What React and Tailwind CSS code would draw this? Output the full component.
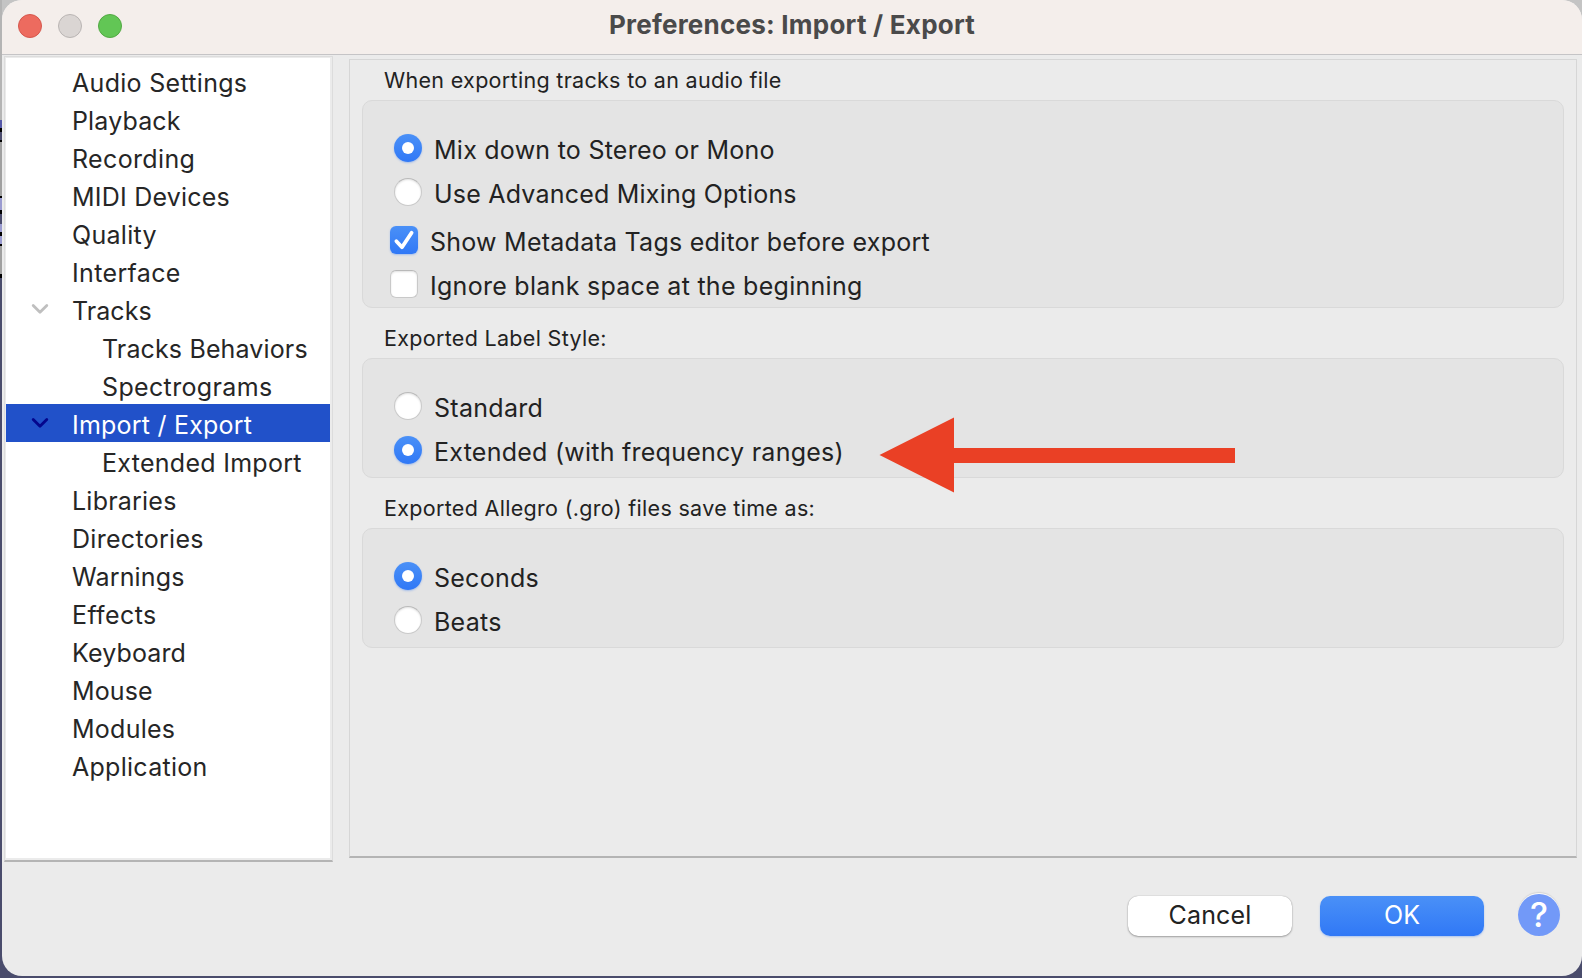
import React from "react";

const cx = (...c) => c.filter(Boolean).join(" ");

const NAV = [
  { label: "Audio Settings", t: "tracking-[0.3px]" },
  { label: "Playback", t: "tracking-[0.15px]" },
  { label: "Recording", t: "tracking-[0.35px]" },
  { label: "MIDI Devices", t: "tracking-[0.22px]" },
  { label: "Quality", t: "tracking-[0.3px]" },
  { label: "Interface", t: "tracking-[0.35px]" },
  { label: "Tracks", t: "tracking-[0.05px]", open: true },
  { label: "Tracks Behaviors", t: "tracking-[0.14px]", child: true },
  { label: "Spectrograms", t: "tracking-[0.35px]", child: true },
  { label: "Import / Export", t: "tracking-[0.22px]", open: true, selected: true },
  { label: "Extended Import", t: "tracking-[0.28px]", child: true },
  { label: "Libraries", t: "tracking-[0.22px]" },
  { label: "Directories", t: "tracking-[0.3px]" },
  { label: "Warnings", t: "tracking-[0.15px]" },
  { label: "Effects", t: "tracking-[0.4px]" },
  { label: "Keyboard", t: "tracking-[0.13px]" },
  { label: "Mouse", t: "tracking-[0.1px]" },
  { label: "Modules", t: "tracking-[0.25px]" },
  { label: "Application", t: "tracking-[0.28px]" },
];

function NavItem({ item }) {
  return (
    <li
      className={cx(
        "flex h-[38px] items-center text-[25px] leading-[38px] whitespace-nowrap",
        item.selected ? "bg-[#2151c9] text-white" : "text-[#262626]"
      )}
    >
      <span className={cx("flex shrink-0 justify-start pl-[25px]", item.child ? "w-[96px]" : "w-[66px]")}>
        {item.open && (
          <svg width="18" height="12" viewBox="0 0 18 12" fill="none">
            <path
              d="M2.2 2.4 9 9.2l6.8-6.8"
              stroke={item.selected ? "#04068c" : "#bfbfbf"}
              strokeWidth="2.8"
              strokeLinecap="round"
              strokeLinejoin="round"
            />
          </svg>
        )}
      </span>
      <span className={cx("pt-1", item.t)}>{item.label}</span>
    </li>
  );
}

function Radio({ checked }) {
  return checked ? (
    <span className="flex size-7 shrink-0 items-center justify-center rounded-full bg-linear-to-b from-[#4a90f7] to-[#3078f6] shadow-[0_1px_2px_rgba(48,120,246,0.35)]">
      <span className="size-3 rounded-full bg-white" />
    </span>
  ) : (
    <span className="size-7 shrink-0 rounded-full border border-[#c9c9c9] border-t-[#b9b9b9] bg-white shadow-[inset_0_1px_2px_rgba(0,0,0,0.12)]" />
  );
}

function Checkbox({ checked }) {
  return checked ? (
    <span className="flex size-7 shrink-0 items-center justify-center rounded-[6px] bg-linear-to-b from-[#4a90f7] to-[#3078f6] shadow-[0_1px_2px_rgba(48,120,246,0.35)]">
      <svg width="28" height="28" viewBox="0 0 28 28" fill="none">
        <path d="M6.4 15.2 12 21.2 21.6 6.8" stroke="#fff" strokeWidth="3.8" strokeLinecap="round" strokeLinejoin="round" />
      </svg>
    </span>
  ) : (
    <span className="size-7 shrink-0 rounded-[6px] border border-[#c9c9c9] border-t-[#b9b9b9] bg-white shadow-[inset_0_1px_2px_rgba(0,0,0,0.12)]" />
  );
}

function Option({ type = "radio", checked, label, t = "tracking-[0.25px]" }) {
  const Control = type === "radio" ? Radio : Checkbox;
  return (
    <div className={cx("flex h-7 items-center gap-3", type === "radio" ? "pl-[31px]" : "pl-[27px]")}>
      <Control checked={checked} />
      <span className={cx("pt-[3px] text-[25px] leading-7 whitespace-nowrap text-[#222]", t)}>{label}</span>
    </div>
  );
}

function Group({ title, className, children }) {
  return (
    <section>
      <h2 className="pl-[22px] text-[21.5px] leading-[42px] tracking-[0.31px] whitespace-nowrap text-[#222]">{title}</h2>
      <div
        className={cx(
          "-mt-px flex flex-col gap-4 rounded-[10px] border border-[#d9d9d9] bg-[#e4e4e4] pt-[33px]",
          className
        )}
      >
        {children}
      </div>
    </section>
  );
}

export default function App() {
  return (
    <div className="flex h-[978px] w-[1582px] overflow-hidden bg-linear-to-b from-[#c4c4c4] from-[40px] to-[#4a4c6c] to-[40px] font-['Inter',sans-serif]">
      <div className="flex w-[2px] shrink-0 flex-col">
        <div className="h-[120px] bg-[#b4b4b4]" />
        <div className="h-2 bg-[#5558a8]" />
        <div className="h-1 bg-black" />
        <div className="h-2 bg-[#4b4c6e]" />
        <div className="h-0.5 bg-black" />
        <div className="h-[54px] bg-[#a0a0a0]" />
        <div className="h-0.5 bg-black" />
        <div className="h-3 bg-[#9a9bd0]" />
        <div className="h-1 bg-black" />
        <div className="h-[10px] bg-[#4b4c6e]" />
        <div className="h-2 bg-[#9a9bd0]" />
        <div className="h-1 bg-black" />
        <div className="h-2 bg-[#9a9bd0]" />
        <div className="h-0.5 bg-black" />
        <div className="h-[28px] bg-[#a0a0a0]" />
        <div className="h-1 bg-black" />
      </div>
      <div className="flex h-[976px] grow flex-col overflow-hidden rounded-[20px] bg-[#ebebeb]">
        <header className="flex h-[55px] shrink-0 items-start border-b border-[#c5c4c6] bg-[#f4eeeb]">
          <div className="flex w-[300px] gap-4 pt-[14px] pl-4">
            <span className="size-6 rounded-full border border-[#d5574d] bg-[#ed6b5f]" />
            <span className="size-6 rounded-full border border-[#b9b4b3] bg-[#dad5d3]" />
            <span className="size-6 rounded-full border border-[#52a843] bg-[#62c655]" />
          </div>
          <h1 className="w-[980px] text-center text-[26px] leading-[50px] font-bold tracking-[0.23px] text-[#4a4a4a]">
            <span>Preferences: Import / Export</span>
          </h1>
        </header>

        <div className="flex items-start">
          <nav className="mt-px ml-[2px] h-[806px] w-[329px] border border-b-2 border-[#dcdcdc] border-b-[#b4b4b4] bg-[#ebebeb] py-px pr-0.5 pl-px">
            <ul className="h-[800px] bg-white pt-1">
              {NAV.map((item) => (
                <NavItem key={item.label} item={item} />
              ))}
            </ul>
          </nav>

          <main className="mt-1 ml-4 flex h-[799px] w-[1228px] flex-col border border-b-2 border-[#d6d6d6] border-b-[#b4b4b4] px-3">
            <div className="-mt-px">
              <Group title="When exporting tracks to an audio file" className="mb-[9px] h-[208px]">
                <Option checked label="Mix down to Stereo or Mono" />
                <Option label="Use Advanced Mixing Options" t="tracking-[0.21px]" />
                <div className="mt-1 flex flex-col gap-4">
                  <Option type="checkbox" checked label="Show Metadata Tags editor before export" />
                  <Option type="checkbox" label="Ignore blank space at the beginning" t="tracking-[0.28px]" />
                </div>
              </Group>
              <Group title="Exported Label Style:" className="mb-[9px] h-[120px]">
                <Option label="Standard" t="tracking-[0.3px]" />
                <div className="relative">
                  <Option checked label="Extended (with frequency ranges)" />
                  <svg className="absolute top-[-19px] left-[515px]" width="358" height="76" viewBox="0 0 358 76">
                    <path d="M1.5 38 76 .5V31h281v15H76v29.500z" fill="#ea4025" />
                  </svg>
                </div>
              </Group>
              <Group title="Exported Allegro (.gro) files save time as:" className="h-[120px]">
                <Option checked label="Seconds" />
                <Option label="Beats" />
              </Group>
            </div>
          </main>
        </div>

        <footer className="mt-8 flex items-center justify-end pr-[22px]">
          <button className="mt-0.5 h-10 w-[164px] rounded-[10px] bg-white pb-0.5 text-[25px] leading-[38px] tracking-[0.15px] text-[#222] shadow-[0_0_1px_rgba(0,0,0,0.35),0_1px_2px_rgba(0,0,0,0.3)]">
            <span>Cancel</span>
          </button>
          <button className="mt-0.5 ml-7 h-10 w-[164px] rounded-[10px] bg-linear-to-b from-[#4a90f7] to-[#3078f6] pb-0.5 text-[25px] leading-[38px] text-white shadow-[0_1px_2px_rgba(48,120,246,0.35)]">
            <span>OK</span>
          </button>
          <button className="ml-[34px] flex size-[42px] items-center justify-center rounded-full bg-[#7299f8] text-[34px] leading-none font-medium text-white shadow-[0_-1px_1px_#fff,0_-2px_1px_#d0d0d0]">
            <span>?</span>
          </button>
        </footer>
      </div>
    </div>
  );
}
